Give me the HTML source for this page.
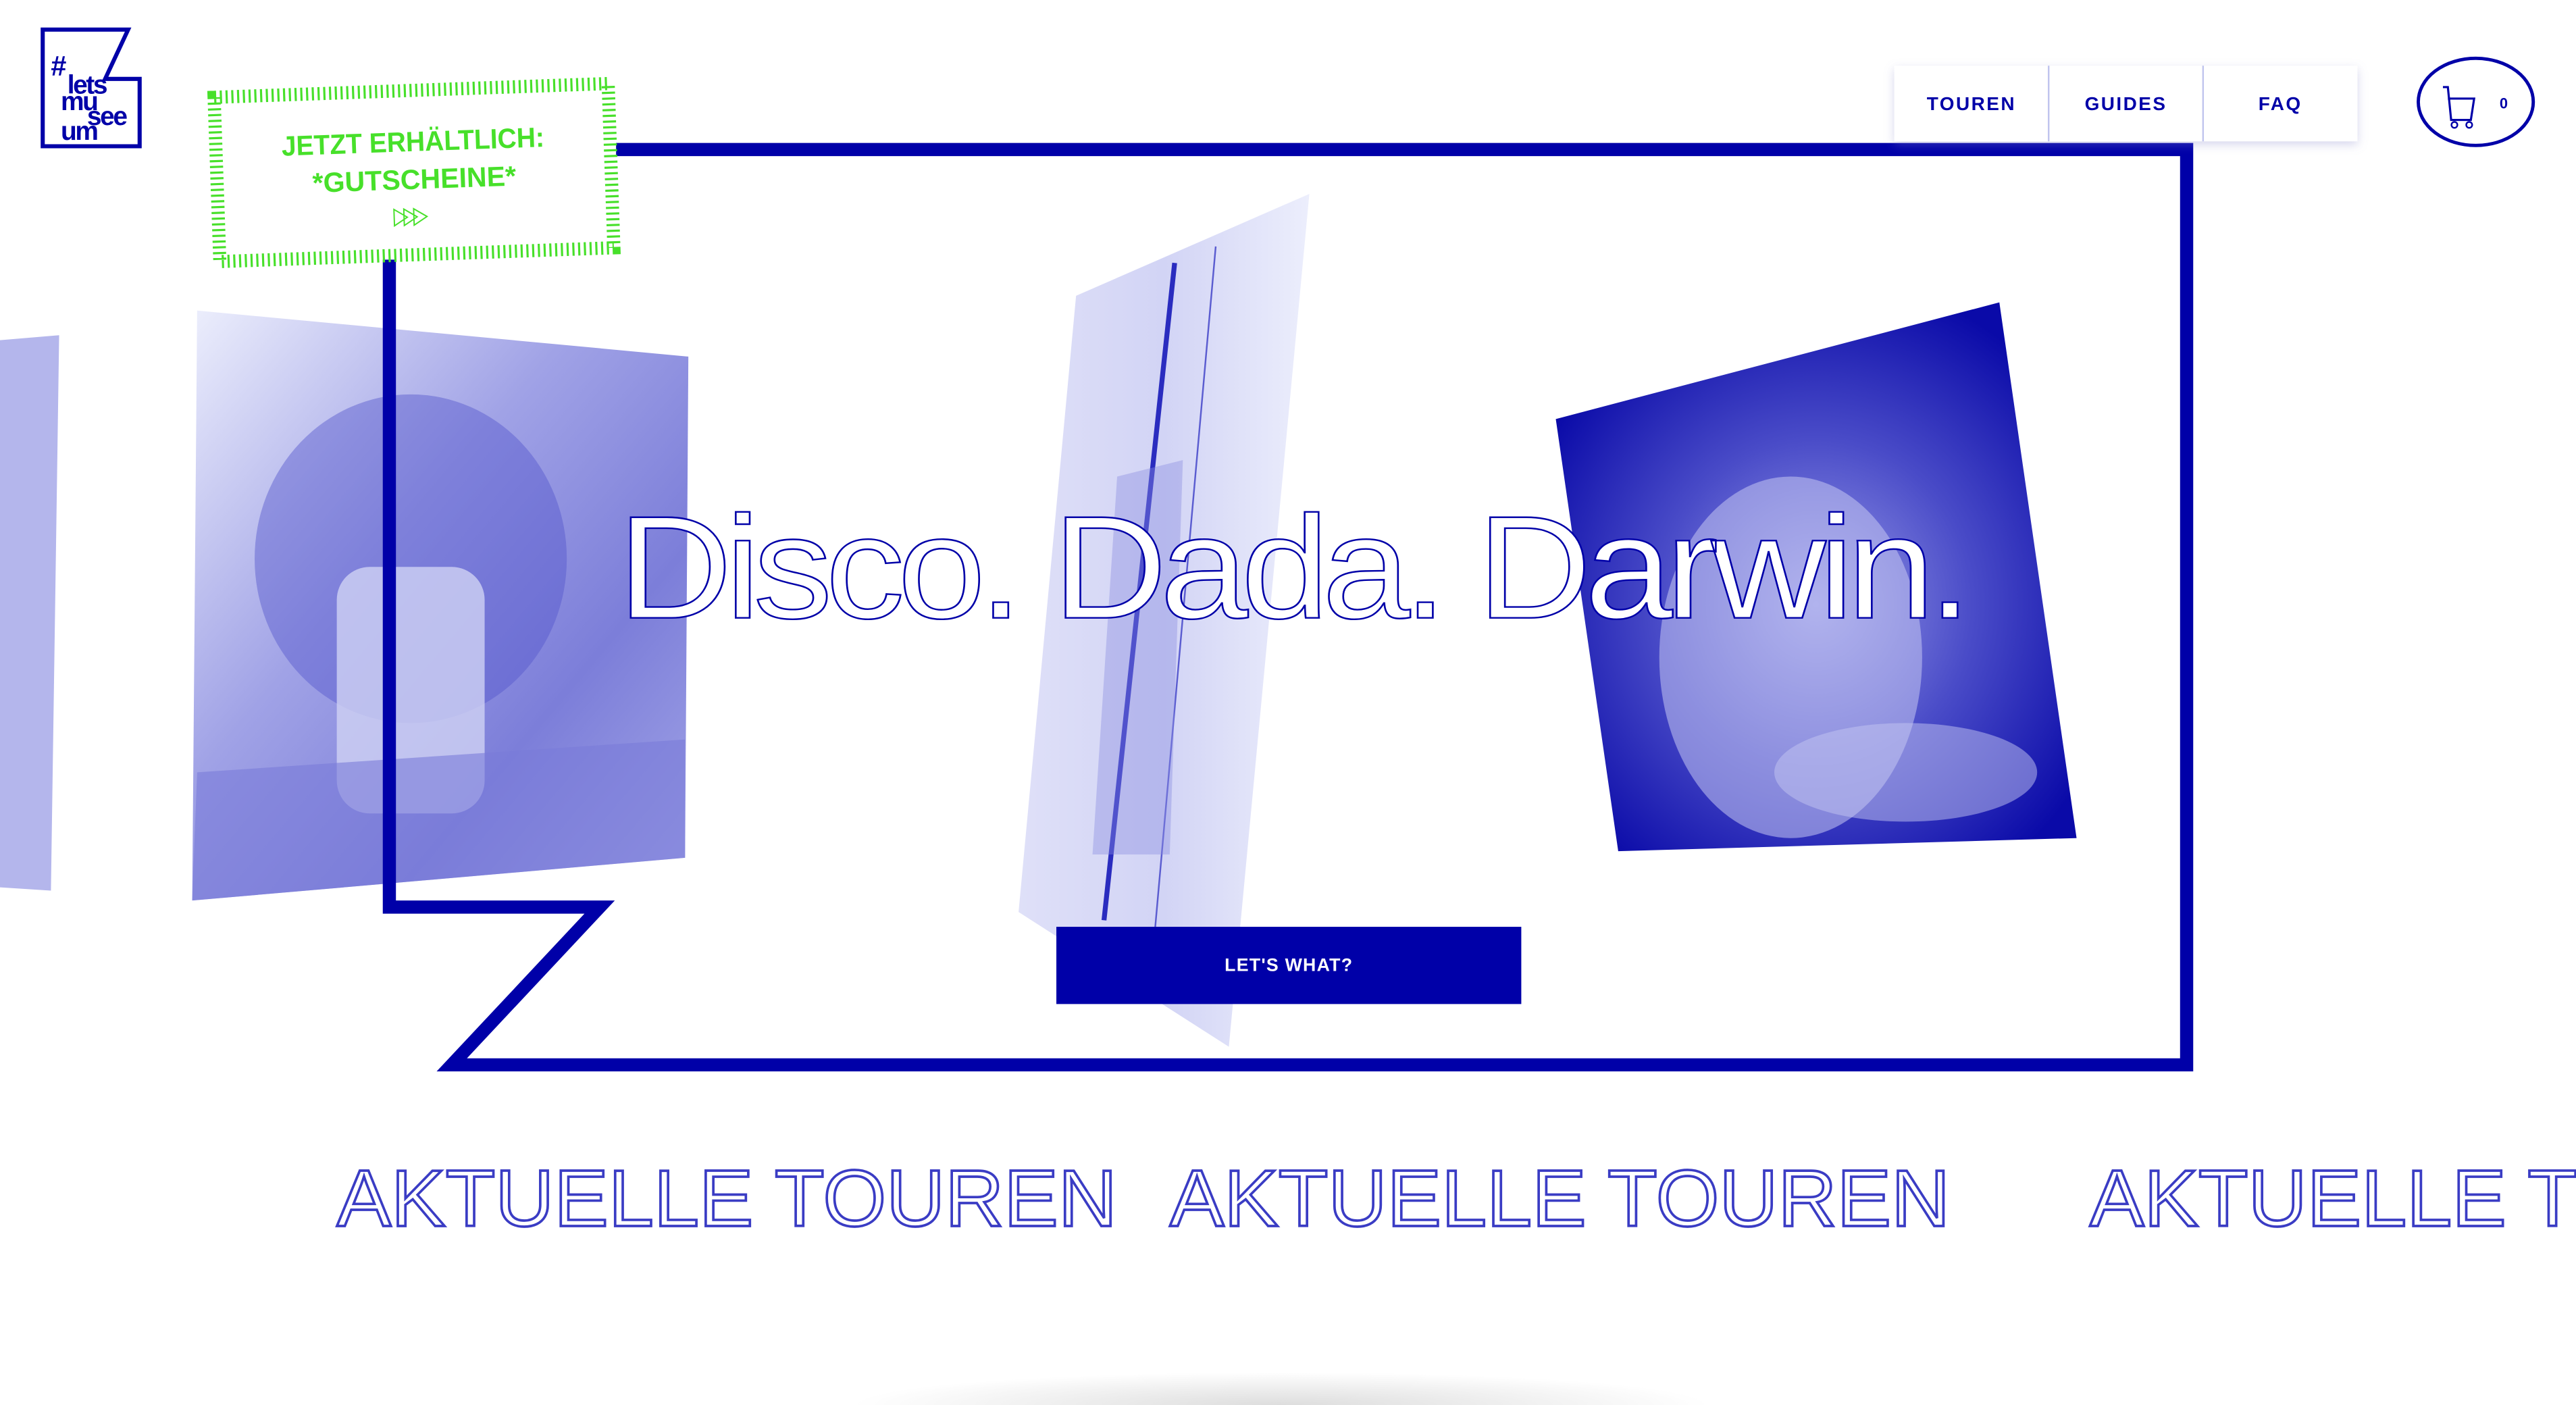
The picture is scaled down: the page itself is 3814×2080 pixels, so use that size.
<!DOCTYPE html>
<html><head><meta charset="utf-8"><style>
html,body{margin:0;padding:0;background:#fff;width:3814px;height:2080px;overflow:hidden}
svg{display:block}
text{font-family:"Liberation Sans",sans-serif}
</style></head><body>
<svg width="3814" height="2080" viewBox="0 0 1568 855" preserveAspectRatio="none" xmlns="http://www.w3.org/2000/svg">
<defs>
<linearGradient id="dog" x1="0" y1="0" x2="1" y2="1">
<stop offset="0" stop-color="#eceefc"/><stop offset="0.4" stop-color="#a0a2e6"/><stop offset="0.7" stop-color="#7c7ed9"/><stop offset="1" stop-color="#a6a8e8"/></linearGradient>
<linearGradient id="bl" x1="0" y1="0" x2="1" y2="0">
<stop offset="0" stop-color="#dfe0f8"/><stop offset="0.5" stop-color="#d2d4f5"/><stop offset="1" stop-color="#eceefc"/></linearGradient>
<radialGradient id="eye" cx="0.5" cy="0.55" r="0.6">
<stop offset="0" stop-color="#9a9ce8"/><stop offset="0.5" stop-color="#4a4cc8"/><stop offset="1" stop-color="#0a0aa8"/></radialGradient>
<radialGradient id="sh" cx="0.5" cy="1" r="0.5">
<stop offset="0" stop-color="#ddd"/><stop offset="1" stop-color="#fff"/></radialGradient>
<filter id="ds" x="-10%" y="-20%" width="120%" height="160%"><feDropShadow dx="0" dy="2" stdDeviation="3" flood-color="#8888cc" flood-opacity="0.35"/></filter>
</defs>

<polygon points="0,207 36,204 31,542 0,540" fill="#b4b6ec"/>
<polygon points="120,189 419,217 417,522 117,548" fill="url(#dog)"/>
<ellipse cx="250" cy="340" rx="95" ry="100" fill="#5557cc" opacity="0.45"/>
<rect x="205" y="345" width="90" height="150" rx="20" fill="#d0d2f4" opacity="0.8"/>
<polygon points="120,470 417,450 417,522 117,548" fill="#7a7cd8" opacity="0.6"/>
<polygon points="655,180 797,118 748,637 620,555" fill="url(#bl)"/>
<line x1="715" y1="160" x2="672" y2="560" stroke="#2a2cbf" stroke-width="3"/>
<line x1="740" y1="150" x2="700" y2="600" stroke="#5a5cd0" stroke-width="1"/>
<polygon points="680,290 720,280 712,520 665,520" fill="#8a8ce0" opacity="0.4"/>
<polygon points="947,255 1217,184 1264,510 985,518" fill="url(#eye)"/>
<ellipse cx="1090" cy="400" rx="80" ry="110" fill="#c4c6f2" opacity="0.55"/>
<ellipse cx="1160" cy="470" rx="80" ry="30" fill="#c4c6f2" opacity="0.5"/>

<path d="M375,91 L1331,91 L1331,648 L275,648 L365,552 L237,552 L237,158" fill="none" stroke="#0000a8" stroke-width="8"/>

<g transform="rotate(-2 252 105)">
<rect x="132" y="55" width="240" height="100" fill="none" stroke="#47e02a" stroke-width="8" stroke-dasharray="1.3 2.2"/>
<text x="252" y="92" text-anchor="middle" font-size="17" font-weight="bold" fill="#47e02a" textLength="160" lengthAdjust="spacingAndGlyphs">JETZT ERHÄLTLICH:</text>
<text x="252" y="115" text-anchor="middle" font-size="17" font-weight="bold" fill="#47e02a" textLength="124" lengthAdjust="spacingAndGlyphs">*GUTSCHEINE*</text>
<path d="M239,127 l8,5 l-8,5z M245,127 l8,5 l-8,5z M251,127 l8,5 l-8,5z" fill="none" stroke="#47e02a" stroke-width="0.8"/>
</g>

<path d="M26,18 L78,18 L64,48 L85,48 L85,89 L26,89 Z" fill="#fff" stroke="#0000a8" stroke-width="2.5"/>
<text x="31" y="46" font-size="17" font-weight="bold" fill="#0000a8">#</text>
<text x="41" y="57" font-size="16" font-weight="bold" fill="#0000a8" letter-spacing="-1">lets</text>
<text x="37" y="67" font-size="16" font-weight="bold" fill="#0000a8" letter-spacing="-1">mu</text>
<text x="53" y="76" font-size="16" font-weight="bold" fill="#0000a8" letter-spacing="-1">see</text>
<text x="37" y="85" font-size="16" font-weight="bold" fill="#0000a8" letter-spacing="-1">um</text>

<g filter="url(#ds)"><rect x="1153" y="40" width="282" height="46" fill="#fff"/></g>
<line x1="1247" y1="40" x2="1247" y2="86" stroke="#c0c4ee" stroke-width="1"/>
<line x1="1341" y1="40" x2="1341" y2="86" stroke="#c0c4ee" stroke-width="1"/>
<text x="1200" y="67" text-anchor="middle" font-size="11.5" font-weight="bold" fill="#0000a8" letter-spacing="1">TOUREN</text>
<text x="1294" y="67" text-anchor="middle" font-size="11.5" font-weight="bold" fill="#0000a8" letter-spacing="1">GUIDES</text>
<text x="1388" y="67" text-anchor="middle" font-size="11.5" font-weight="bold" fill="#0000a8" letter-spacing="1">FAQ</text>
<ellipse cx="1507" cy="62" rx="35" ry="26.5" fill="none" stroke="#0000a8" stroke-width="2"/>
<path d="M1487,53 h3 l2,20 h12 l2,-13 h-16" fill="none" stroke="#0000a8" stroke-width="1.3"/>
<circle cx="1494" cy="76" r="1.8" fill="none" stroke="#0000a8" stroke-width="1"/>
<circle cx="1503" cy="76" r="1.8" fill="none" stroke="#0000a8" stroke-width="1"/>
<text x="1524" y="66" text-anchor="middle" font-size="9" font-weight="bold" fill="#0000a8">0</text>

<text x="376" y="376" font-size="89" fill="#fff" stroke="#0000a8" stroke-width="1" letter-spacing="-4" textLength="820" lengthAdjust="spacingAndGlyphs">Disco. Dada. Darwin.</text>

<rect x="643" y="564" width="283" height="47" fill="#0000a8"/>
<text x="784.5" y="591" text-anchor="middle" font-size="11" font-weight="bold" fill="#fff" letter-spacing="0.5">LET'S WHAT?</text>

<g font-size="49" fill="none" stroke="#3a3cc4" stroke-width="1.5">
<text x="205" y="746" textLength="475" lengthAdjust="spacingAndGlyphs">AKTUELLE TOUREN</text>
<text x="712" y="746" textLength="475" lengthAdjust="spacingAndGlyphs">AKTUELLE TOUREN</text>
<text x="1272" y="746" textLength="475" lengthAdjust="spacingAndGlyphs">AKTUELLE TOUREN</text>
</g>

<rect x="520" y="815" width="520" height="40" fill="url(#sh)"/>
</svg>
</body></html>
